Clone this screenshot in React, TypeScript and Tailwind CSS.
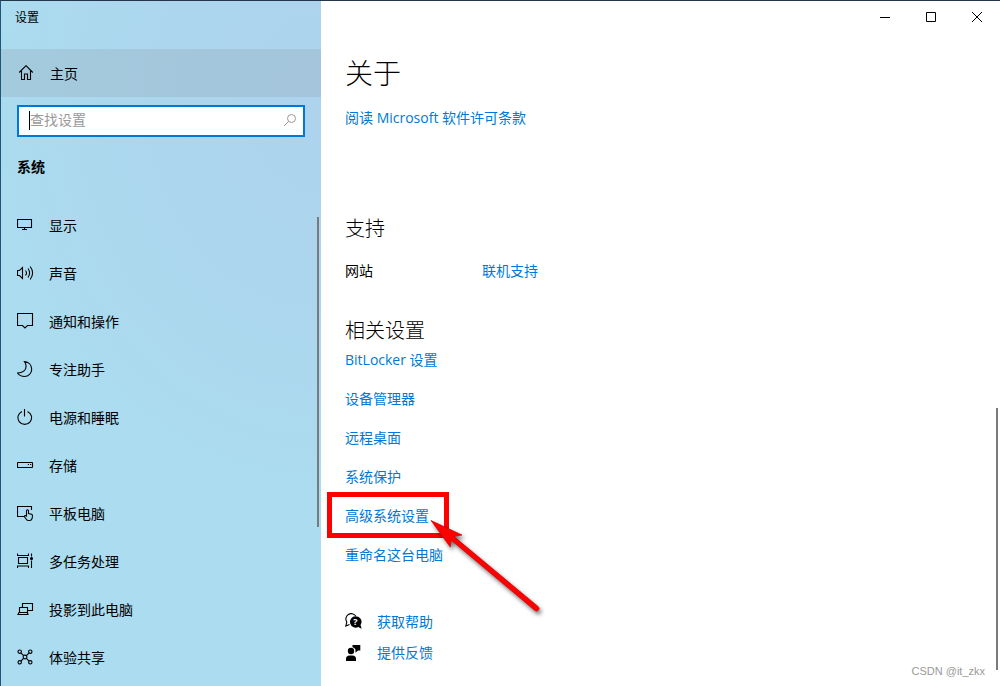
import type { ReactNode } from "react";

type IconProps = {
    children: ReactNode;
};

function Icon({ children }: IconProps) {
    return (
        <svg
            viewBox="0 0 18 18"
            className="h-[18px] w-[18px] shrink-0"
            fill="none"
            stroke="currentColor"
            strokeWidth="1.1"
            aria-hidden="true"
        >
            {children}
        </svg>
    );
}

const menu = [
    {
        label: "显示",
        icon: (
            <>
                <path d="M.5 2.5h14v8H.5z" />
                <path d="M7.5 10.5v2M5 12.5h5" />
            </>
        ),
    },
    {
        label: "声音",
        icon: (
            <>
                <path d="M.5 5.5h2L5.5 2.5v11l-3-3h-2z" />
                <path d="M8.5 5.5q2 2.5 0 5M11 3.5q3.2 4.5 0 9M13.2 1.5q4.8 6.5 0 13" />
            </>
        ),
    },
    {
        label: "通知和操作",
        icon: <path d="M.5.5h15v12h-5L8 15l-2.500-2.500h-5z" />,
    },
    {
        label: "专注助手",
        icon: (
            <path d="M7.500.6C12 1 14.700 4.200 14.700 8.200c0 4.200-3.200 7.300-7.200 7.300-2.800 0-5.300-1.200-7-3.500C6 12 9.500 9 9 4.500 8.800 3 8.300 1.600 7.500.6z" />
        ),
    },
    {
        label: "电源和睡眠",
        icon: (
            <>
                <path d="M5 2.400a6.800 6.800 0 1 0 5.500 0" />
                <path d="M7.500 0v7.500" />
            </>
        ),
    },
    {
        label: "存储",
        icon: (
            <>
                <rect x=".5" y="5.500" width="15" height="5" rx=".5" />
                <path d="M10.800 7.500H12M13 7.500h1.200" />
            </>
        ),
    },
    {
        label: "平板电脑",
        icon: (
            <>
                <path d="M7 11.500H.5v-10h14V5" />
                <path d="M9.500 11V5.500q1-1.600 2 0V8.500l3 .7q1.200.4 1 1.800l-.5 2.800q-.6 1.700-2.200 1.700h-1.600q-1 0-1.700-1l-2.300-3q.6-1.500 2.300-.5z" />
            </>
        ),
    },
    {
        label: "多任务处理",
        icon: (
            <>
                <path d="M1.500 4.500h9v6h-9zM.5.5v2h11v-2M.5 15v-2h11v2M14.500.5v3M14.500 7.500V15" />
                <circle cx="14.500" cy="5.500" r="1" fill="currentColor" />
            </>
        ),
    },
    {
        label: "投影到此电脑",
        icon: (
            <>
                <path d="M5.500 6V2.500h10v7h-5" />
                <path d="M2.500 6.500h8v5h-8zM1 13.500h10l-.8-2H2z" />
            </>
        ),
    },
    {
        label: "体验共享",
        icon: (
            <>
                <circle cx="2.700" cy="2.700" r="1.700" />
                <circle cx="13.300" cy="2.700" r="1.700" />
                <circle cx="2.700" cy="13.300" r="1.700" />
                <circle cx="13.300" cy="13.300" r="1.700" />
                <circle cx="8" cy="8" r="1.900" />
                <path d="M4 4l2.600 2.600M12 4L9.400 6.600M4 12l2.600-2.600M12 12L9.400 9.400" />
            </>
        ),
    },
];

const related = [
    "BitLocker 设置",
    "设备管理器",
    "远程桌面",
    "系统保护",
    "高级系统设置",
    "重命名这台电脑",
];

const linkClass = "text-[#0078d7] hover:text-gray-500";

// Red frame and arrow pointing at the link they sit on
function Marker() {
    return (
        <span className="pointer-events-none">
            <span className="absolute -top-3.5 -left-[18px] h-[46px] w-[122px] border-[5px] border-[#fe0000]" />
            <svg
                viewBox="0 0 130 110"
                className="absolute top-2.5 left-[82px] z-10 h-[110px] w-[130px] max-w-none drop-shadow-[2px_3px_2px_rgba(0,0,0,0.55)]"
                aria-hidden="true"
            >
                <path
                    d="M4 4.500L35 19l-8 1.500L111 90.500a2.300 2.300 0 0 1-3 4L24 24l-.7 7z"
                    fill="#fe0000"
                    stroke="#d40000"
                    strokeWidth=".7"
                />
            </svg>
        </span>
    );
}

function Sidebar() {
    return (
        <aside className="w-80 shrink-0 bg-[#abdcef] bg-[radial-gradient(340px_400px_at_100%_15%,#add3ed_0%,#acd6ee_50%,#abdcef_100%)]">
            <div className="mb-3.5 flex h-[34px] items-center pl-3.5 text-xs">
                设置
            </div>

            <a
                href="#home"
                className="flex h-12 items-center gap-3.5 bg-[#8b9ba8]/25 pt-0.5 pl-[17px] hover:bg-[#8b9ba8]/40"
            >
                <Icon>
                    <path d="M1.200 7.500L8 .7l6.800 6.800M3.500 6v8.500h3V9h3v5.500h3V6" />
                </Icon>
                主页
            </a>

            <div className="mx-4 mt-2 flex h-8 items-center border-2 border-[#0078d7] bg-white pr-1.5 pb-0.5 pl-2.5">
                <span className="h-[19px] w-px bg-black" />
                <input
                    type="text"
                    aria-label="查找设置"
                    placeholder="查找设置"
                    className="min-w-0 flex-1 bg-transparent leading-5 outline-none placeholder:text-[#999]"
                />
                <svg
                    viewBox="0 0 14 14"
                    className="h-3.5 w-3.5"
                    fill="none"
                    stroke="#999"
                    aria-hidden="true"
                >
                    <circle cx="8.500" cy="5.500" r="4" />
                    <path d="M5.700 8.300L1 13" />
                </svg>
            </div>

            <h2 className="mt-5 pl-4 leading-5 font-bold">系统</h2>

            <div className="mt-[25px] flex justify-between pr-0.5">
                <nav className="flex-1">
                    {menu.map((item) => (
                        <a
                            key={item.label}
                            href="#"
                            className="flex h-12 items-center gap-3.5 pl-4"
                        >
                            <Icon>{item.icon}</Icon>
                            {item.label}
                        </a>
                    ))}
                </nav>
                <div className="mt-[15px] h-[310px] w-0.5 bg-[#7a7a7a]" />
            </div>
        </aside>
    );
}

function WindowControls() {
    return (
        <div className="flex h-8 justify-end">
            <button
                aria-label="最小化"
                className="flex w-[46px] items-center justify-center hover:bg-gray-200"
            >
                <svg viewBox="0 0 10 10" className="h-2.5 w-2.5" stroke="#000">
                    <path d="M0 5.500h10" />
                </svg>
            </button>
            <button
                aria-label="最大化"
                className="flex w-[46px] items-center justify-center hover:bg-gray-200"
            >
                <svg
                    viewBox="0 0 10 10"
                    className="h-2.5 w-2.5"
                    fill="none"
                    stroke="#000"
                >
                    <path d="M.5.5h9v9h-9z" />
                </svg>
            </button>
            <button
                aria-label="关闭"
                className="flex w-[46px] items-center justify-center hover:bg-red-500"
            >
                <svg viewBox="0 0 10 10" className="h-2.5 w-2.5" stroke="#000">
                    <path d="M0 0l10 10M10 0L0 10" />
                </svg>
            </button>
        </div>
    );
}

export default function App() {
    return (
        <div className="flex min-h-screen border-t border-l border-t-[#26364a] border-l-[#1f5576] bg-white font-['Open_Sans','Noto_Sans_CJK_SC',sans-serif] text-sm text-black">
            <Sidebar />

            <main className="relative min-w-0 flex-1">
                <WindowControls />

                <div className="pt-5 pl-6">
                    <h1 className="text-[28px] leading-10 font-light">关于</h1>
                    <p className="mt-[15px] leading-5">
                        <a href="#license" className={linkClass}>
                            阅读 Microsoft 软件许可条款
                        </a>
                    </p>

                    <h2 className="mt-[87px] text-xl leading-7 font-light">
                        支持
                    </h2>
                    <div className="mt-[18px] flex leading-5">
                        <span className="w-[137px]">网站</span>
                        <a href="#support" className={linkClass}>
                            联机支持
                        </a>
                    </div>

                    <h2 className="mt-9 text-xl leading-7 font-light">
                        相关设置
                    </h2>
                    <ul className="mt-[5px] flex flex-col items-start gap-[19px] leading-5">
                        {related.map((label) => (
                            <li key={label} className="relative">
                                <a href="#" className={linkClass}>
                                    {label}
                                </a>
                                {label === "高级系统设置" && <Marker />}
                            </li>
                        ))}
                    </ul>

                    <div className="mt-[47px] flex flex-col items-start gap-[11px] leading-5">
                        <a
                            href="#help"
                            className={`flex items-center gap-3.5 ${linkClass}`}
                        >
                            <svg
                                viewBox="0 0 18 18"
                                className="h-[18px] w-[18px]"
                                aria-hidden="true"
                            >
                                <path
                                    d="M10.800 3A5.200 5.200 0 1 0 1.800 9L.8 13l3.700-1.500"
                                    fill="none"
                                    stroke="#000"
                                    strokeWidth="1.100"
                                />
                                <path
                                    d="M10.500 3.200a5.700 5.700 0 1 0 2.700 10.800l3.500 1.800-1.200-3.700A5.700 5.700 0 0 0 10.500 3.200z"
                                    fill="#000"
                                />
                                <text
                                    x="10.500"
                                    y="12.300"
                                    textAnchor="middle"
                                    fontSize="9"
                                    fontWeight="700"
                                    fill="#fff"
                                >
                                    ?
                                </text>
                            </svg>
                            获取帮助
                        </a>
                        <a
                            href="#feedback"
                            className={`flex items-center gap-3.5 ${linkClass}`}
                        >
                            <svg
                                viewBox="0 0 18 18"
                                className="h-[18px] w-[18px]"
                                fill="#000"
                                aria-hidden="true"
                            >
                                <circle cx="6" cy="7" r="3.200" />
                                <path d="M1 17v-2q0-3.500 3.500-3.500h3q3.500 0 3.500 3.500v2z" />
                                <path d="M7.500 1h7.800v5.500h-2.300l-2.500 2.300V6.500q0-2.500-3-3.200z" />
                            </svg>
                            提供反馈
                        </a>
                    </div>
                </div>

                <div className="absolute right-0.5 bottom-4 h-[262px] w-0.5 bg-[#7a7a7a]" />
                <span className="absolute right-[15px] bottom-[7px] font-['Liberation_Sans',sans-serif] text-[11px] leading-4 text-[#999]">
                    CSDN @it_zkx
                </span>
            </main>
        </div>
    );
}
